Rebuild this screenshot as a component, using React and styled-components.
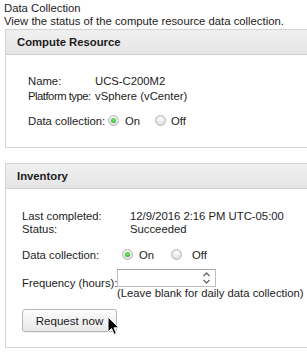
import React from 'react'
import styled, { createGlobalStyle } from 'styled-components'

const Global = createGlobalStyle`
  html, body { margin: 0; padding: 0; background: #fff; overflow: hidden; }
  body { font-family: "Liberation Sans", Arial, sans-serif; font-size: 11.3px; color: #1c1c1c; }
`

const Page = styled.div`
  width: 330px;
  padding: 2px 0 0 4px;
`
const Title = styled.div`
  line-height: 13px;
`
const Subtitle = styled.div`
  line-height: 13px;
  margin-bottom: 1px;
  white-space: nowrap;
`
const Panel = styled.section`
  margin-left: 1px;
  border: 1px solid #d4d4d4;
  margin-bottom: 15px;
`
const PanelHeader = styled.div`
  height: 24px;
  padding-left: 11px;
  display: flex;
  align-items: center;
  font-weight: bold;
  background: linear-gradient(#f0f0f0, #e5e5e5);
  border-bottom: 1px solid #cfcfcf;
`
const PanelBody = styled.div`
  padding: ${p => p.$pad};
  display: flex;
  flex-direction: column;
  white-space: nowrap;
`
const InfoGrid = styled.div`
  display: grid;
  grid-template-columns: ${p => p.$col}px auto;
  row-gap: ${p => p.$gap}px;
  line-height: 13px;
`
const Key = styled.span`
  letter-spacing: ${p => p.$ls || 0}px;
`
const Row = styled.div`
  display: flex;
  align-items: center;
  height: 13px;
  margin-top: ${p => p.$mt}px;
`
const Label = styled.span`
  width: ${p => p.$w}px;
  flex: none;
`
const RadioGroup = styled.label`
  display: inline-flex;
  align-items: center;
  margin-right: ${p => p.$mr || 0}px;
`
const RadioDot = styled.span`
  width: 11px;
  height: 11px;
  border-radius: 50%;
  box-sizing: border-box;
  border: 1px solid #b8b8b8;
  background: radial-gradient(circle at 50% 35%, #ffffff, #d9d9d9 85%);
  display: inline-flex;
  align-items: center;
  justify-content: center;
  margin-right: ${p => p.$gap}px;
  &::after {
    content: '';
    width: 5px;
    height: 5px;
    border-radius: 50%;
    background: ${p => (p.$on ? 'radial-gradient(circle at 50% 40%, #7be873, #1ea81e)' : 'transparent')};
  }
`
const FreqRow = styled.div`
  display: flex;
  align-items: flex-start;
  margin-top: 8px;
`
const FreqLabel = styled.span`
  width: 95px;
  flex: none;
  margin-top: 8px;
  line-height: 13px;
`
const FreqBox = styled.div`
  display: flex;
  flex-direction: column;
`
const NumberField = styled.div`
  width: 99px;
  height: 18px;
  box-sizing: border-box;
  border: 1px solid #bdbdbd;
  border-top-color: #a3a3a3;
  background: #fff;
  display: flex;
  justify-content: flex-end;
  align-items: center;
  padding-right: 4px;
`
const Hint = styled.div`
  line-height: 13px;
`
const ButtonWrap = styled.div`
  position: relative;
  margin-top: 9px;
  align-self: flex-start;
`
const Button = styled.button`
  display: block;
  font-family: inherit;
  font-size: 11.6px;
  color: #1c1c1c;
  width: 95px;
  height: 23px;
  border: 1px solid #b6b6b6;
  border-radius: 3px;
  background: linear-gradient(#fdfdfd, #e8e8e8);
  box-shadow: 0 1px 0 rgba(0, 0, 0, 0.06);
  padding: 0;
`
const Cursor = styled.svg`
  position: absolute;
  left: 85px;
  top: 7px;
`

const Radio = ({ on, children, mr, gap }) => (
  <RadioGroup $mr={mr}>
    <RadioDot $on={on} $gap={gap} />
    {children}
  </RadioGroup>
)

export default function App() {
  return (
    <Page>
      <Global />
      <Title>Data Collection</Title>
      <Subtitle>View the status of the compute resource data collection.</Subtitle>

      <Panel>
        <PanelHeader>Compute Resource</PanelHeader>
        <PanelBody $pad="20px 11px 20px 22px">
          <InfoGrid $col={67} $gap={2}>
            <Key>Name:</Key><span>UCS-C200M2</span>
            <Key $ls={-0.5}>Platform type:</Key><span>vSphere (vCenter)</span>
          </InfoGrid>
          <Row $mt={11}>
            <Label $w={80}>Data collection:</Label>
            <Radio on gap={6} mr={15}>On</Radio>
            <Radio gap={5}>Off</Radio>
          </Row>
        </PanelBody>
      </Panel>

      <Panel>
        <PanelHeader>Inventory</PanelHeader>
        <PanelBody $pad="21px 11px 15px 16px">
          <InfoGrid $col={108} $gap={0}>
            <Key>Last completed:</Key><span>12/9/2016 2:16 PM UTC-05:00</span>
            <Key>Status:</Key><span>Succeeded</span>
          </InfoGrid>
          <Row $mt={12}>
            <Label $w={100}>Data collection:</Label>
            <Radio on gap={6} mr={17}>On</Radio>
            <Radio gap={10}>Off</Radio>
          </Row>
          <FreqRow>
            <FreqLabel>Frequency (hours):</FreqLabel>
            <FreqBox>
              <NumberField>
                <svg width="9" height="14" viewBox="0 0 9 14">
                  <path d="M1.5 5 L4.5 2 L7.5 5" fill="none" stroke="#666" strokeWidth="1.3" />
                  <path d="M1.5 9 L4.5 12 L7.5 9" fill="none" stroke="#666" strokeWidth="1.3" />
                </svg>
              </NumberField>
              <Hint>(Leave blank for daily data collection)</Hint>
            </FreqBox>
          </FreqRow>
          <ButtonWrap>
            <Button>Request now</Button>
            <Cursor width="13" height="20" viewBox="0 0 13 20">
              <path d="M1 1 L1 16 L4.6 12.6 L7 18.4 L9.4 17.4 L7 11.8 L12 11.8 Z" fill="#000" stroke="#fff" strokeWidth="1" />
            </Cursor>
          </ButtonWrap>
        </PanelBody>
      </Panel>
    </Page>
  )
}
